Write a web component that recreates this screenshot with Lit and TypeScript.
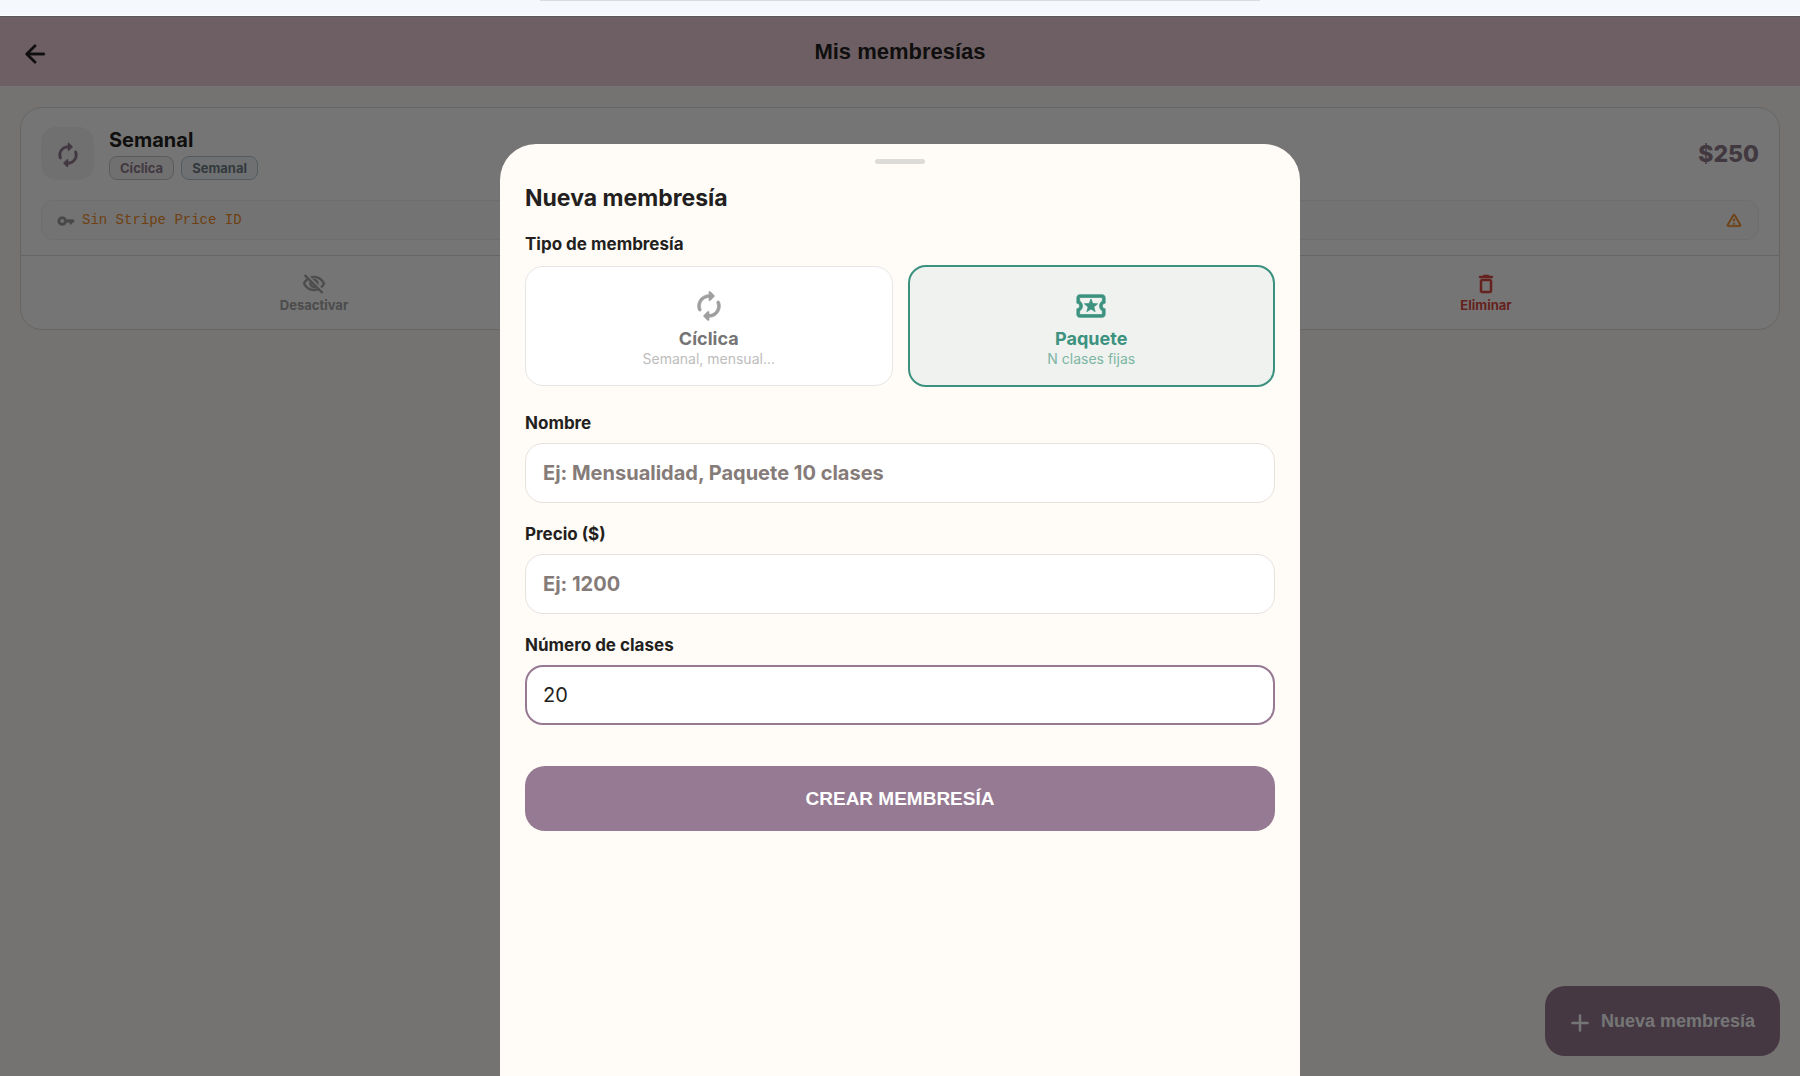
import { LitElement, html, css, svg } from "lit";
import { customElement, state } from "lit/decorators.js";

const icons = {
  back: svg`<path d="M19 11H7.83l4.88-4.88c.39-.39.39-1.03 0-1.42a.996.996 0 0 0-1.41 0l-6.59 6.59a.996.996 0 0 0 0 1.41l6.59 6.59a.996.996 0 1 0 1.41-1.41L7.83 13H19c.55 0 1-.45 1-1s-.45-1-1-1z"/>`,
  renew: svg`<path d="M12 6v1.79c0 .45.54.67.85.35l2.79-2.79c.2-.2.2-.51 0-.71l-2.79-2.79c-.31-.31-.85-.09-.85.36V4c-4.42 0-8 3.58-8 8 0 1.04.2 2.04.57 2.95.27.67 1.13.85 1.64.34.27-.27.38-.68.23-1.04C6.15 13.56 6 12.79 6 12c0-3.31 2.69-6 6-6zm5.79 2.71c-.27.27-.38.69-.23 1.04.28.7.44 1.46.44 2.25 0 3.31-2.69 6-6 6v-1.79c0-.45-.54-.67-.85-.35l-2.79 2.79c-.2.2-.2.51 0 .71l2.79 2.79c.31.31.85.09.85-.35V20c4.42 0 8-3.58 8-8 0-1.04-.2-2.04-.57-2.95-.27-.67-1.13-.85-1.64-.34z"/>`,
  key: svg`<path fill-rule="evenodd" d="M7 6a6 6 0 1 0 5.66 8H17v1a1.5 1.5 0 0 0 3 0v-1h1a2 2 0 0 0 0-4h-8.34A6 6 0 0 0 7 6zm0 3.2a2.8 2.8 0 1 1 0 5.6 2.8 2.8 0 0 1 0-5.6z"/>`,
  warn: svg`<path d="M12 5.99 19.53 19H4.47L12 5.99M2.74 18c-.77 1.33.19 3 1.73 3h15.06c1.54 0 2.5-1.67 1.73-3L13.73 4.99c-.77-1.33-2.69-1.33-3.46 0L2.74 18zM11 11v2c0 .55.45 1 1 1s1-.45 1-1v-2c0-.55-.45-1-1-1s-1 .45-1 1zm0 5h2v2h-2z"/>`,
  hide: svg`<path d="M12 6a9.77 9.77 0 0 1 8.82 5.5 9.647 9.647 0 0 1-2.41 3.12l1.41 1.41c1.39-1.23 2.49-2.77 3.18-4.53C21.27 7.11 17 4 12 4c-1.27 0-2.49.2-3.64.57l1.65 1.65C10.66 6.09 11.32 6 12 6zm-1.07 1.14L13 9.21c.57.25 1.03.71 1.28 1.28l2.07 2.07c.08-.34.14-.7.14-1.07C16.5 9.01 14.48 7 12 7c-.37 0-.72.05-1.07.14zM2.01 3.87l2.68 2.68A11.738 11.738 0 0 0 1 11.5C2.73 15.89 7 19 12 19c1.52 0 2.98-.29 4.32-.82l3.42 3.42 1.41-1.41L3.42 2.45 2.01 3.87zm7.5 7.5 2.61 2.61c-.04.01-.08.02-.12.02a2.5 2.5 0 0 1-2.5-2.5c0-.05.01-.08.01-.13zm-3.4-3.4 1.75 1.75a4.6 4.6 0 0 0-.36 1.78 4.507 4.507 0 0 0 6.27 4.14l.98.98c-.88.24-1.8.38-2.75.38a9.77 9.77 0 0 1-8.82-5.5c.7-1.43 1.72-2.61 2.93-3.53z"/>`,
  trash: svg`<path d="M6 19c0 1.1.9 2 2 2h8c1.1 0 2-.9 2-2V9c0-1.1-.9-2-2-2H8c-1.1 0-2 .9-2 2v10zM8 9h8v10H8V9zm7.5-5-.71-.71c-.18-.18-.44-.29-.7-.29H9.91c-.26 0-.52.11-.7.29L8.5 4H6c-.55 0-1 .45-1 1s.45 1 1 1h12c.55 0 1-.45 1-1s-.45-1-1-1h-2.5z"/>`,
  ticket: svg`<path d="M20 12c0-1.1.9-2 2-2V6c0-1.1-.9-2-2-2H4c-1.1 0-1.99.9-1.99 2v4c1.1 0 1.99.9 1.99 2s-.89 2-2 2v4c0 1.1.9 2 2 2h16c1.1 0 2-.9 2-2v-4c-1.1 0-2-.9-2-2zm0-3.46c-1.19.69-2 1.99-2 3.46s.81 2.77 2 3.46V18H4v-2.54c1.19-.69 2-1.99 2-3.46 0-1.48-.8-2.77-1.99-3.46L4 6h16v2.54zM9.07 16 12 14.12 14.93 16l-.89-3.36 2.69-2.2-3.47-.21L12 7l-1.27 3.22-3.47.21 2.69 2.2z"/>`,
  add: svg`<path d="M18 13h-5v5c0 .55-.45 1-1 1s-1-.45-1-1v-5H6c-.55 0-1-.45-1-1s.45-1 1-1h5V6c0-.55.45-1 1-1s1 .45 1 1v5h5c.55 0 1 .45 1 1s-.45 1-1 1z"/>`,
};

const icon = (name: keyof typeof icons, size: string) =>
  html`<svg class="icon ${size}" viewBox="0 0 24 24" aria-hidden="true">${icons[name]}</svg>`;

@customElement("app-root")
export class AppRoot extends LitElement {
  static styles = css`
    :host {
      display: flex;
      flex-direction: column;
      height: 100vh;
      overflow: hidden;
      font-family: Inter, "Liberation Sans", sans-serif;
      color: #231f20;
    }
    * { box-sizing: border-box; }
    button, input { font: inherit; color: inherit; margin: 0; }
    button { border: 0; background: none; padding: 0; cursor: pointer; }
    h1, h2, p { margin: 0; }
    .icon { display: block; flex: none; fill: currentColor; stroke: currentColor; stroke-width: 0.5; }
    .s18 { width: 18px; height: 18px; }
    .s24 { width: 24px; height: 24px; }
    .s28 { width: 28px; height: 28px; }
    .s30 { width: 30px; height: 30px; }
    .s34 { width: 34px; height: 34px; }

    .chrome {
      flex: none;
      height: 16px;
      background: #f5f9fd;
      border-bottom: 1px solid #ffffff;
      display: flex;
      justify-content: center;
    }
    .address { width: 40%; height: 1px; background: #d9dcdf; }
    .screen { flex: 1; position: relative; background: #fffbf7; overflow: hidden; }

    .bar {
      display: grid;
      grid-template-columns: 1fr auto 1fr;
      align-items: center;
      height: 70px;
      padding: 0 20px;
      background: #efd0d9;
      border-top: 1px solid #c9bcc6;
    }
    .bar h1 {
      font-family: "Liberation Sans", sans-serif;
      font-size: 22px; line-height: 28px; font-weight: 700;
    }
    .back { justify-self: start; padding-top: 4px; }
    .back .icon { stroke-width: 0.3; }

    .list { padding: 21px 20px; }
    .card { border: 1px solid #dcdcdc; border-radius: 22px; background: #ffffff; overflow: hidden; }
    .body { padding: 19px 20px 15px; display: flex; flex-direction: column; gap: 20px; }
    .top { display: flex; align-items: center; gap: 15px; }
    .badge {
      width: 53px; height: 53px; border-radius: 15px; background: #f5f4f5;
      display: grid; place-items: center; padding-top: 3px; color: #8f7a8d;
    }
    .info { flex: 1; }
    .info h2 { font-size: 20px; line-height: 26px; font-weight: 700; }
    .tags { display: flex; gap: 7px; padding-top: 3px; }
    .tag {
      height: 24px; padding: 0 10px; border: 1px solid; border-radius: 8px;
      font-size: 13px; line-height: 22px; font-weight: 700;
    }
    .tag.rose { color: #8f7a8d; border-color: #cbc4ca; background: #f7f4f6; }
    .tag.blue { color: #6f7d86; border-color: #b8c2c8; background: #f1f5f6; }
    .price { font-size: 23px; line-height: 30px; font-weight: 800; color: #8f7a8d; }
    .stripe {
      display: flex; align-items: center; gap: 7px; height: 40px; padding: 0 15px;
      border: 1px solid #eeeeee; border-radius: 12px; background: #fafafa;
      color: #f28c28; font-family: "Liberation Mono", monospace; font-size: 14px;
    }
    .stripe p { flex: 1; padding-bottom: 1px; }
    .grey { color: #9e9e9e; padding-top: 2px; }
    .actions { display: grid; grid-template-columns: repeat(3, 1fr); border-top: 1px solid #dcdcdc; }
    .action {
      display: flex; flex-direction: column; align-items: center;
      padding: 16px 0 15px; font-size: 13px; line-height: 18px; font-weight: 700; color: #a6a6a6;
    }
    .action.danger { grid-column: 3; color: #dd4a42; }

    .fab {
      position: absolute; right: 20px; bottom: 20px; height: 70px; padding: 0 25px 0 20px;
      display: flex; align-items: center; gap: 6px; border-radius: 20px;
      background: #967a93; color: #ffffff;
      font-family: "Liberation Sans", sans-serif; font-size: 18px; font-weight: 700;
    }
    .fab .icon { stroke: none; margin-top: 4px; }

    .scrim {
      position: absolute; inset: 0; padding-top: 128px;
      background: rgba(0, 0, 0, 0.54);
      display: flex; justify-content: center;
    }
    .sheet {
      width: 100%; max-width: 800px; padding: 15px 25px;
      display: flex; flex-direction: column;
      background: #fffbf7; border-radius: 36px 36px 0 0;
    }
    .handle { align-self: center; width: 50px; height: 5px; border-radius: 3px; background: #dddbd7; }
    .sheet h2 { font-size: 23px; line-height: 30px; font-weight: 700; padding-top: 19px; }
    .label { font-size: 17px; line-height: 20px; font-weight: 700; }
    .kinds { border: 0; margin: 0; padding: 21px 0 0; min-width: 0; }
    .kinds legend { padding: 0; float: left; width: 100%; margin-bottom: 11px; }
    .options { clear: both; display: grid; grid-template-columns: 1fr 1fr; gap: 15px; align-items: center; }
    .kind {
      display: flex; flex-direction: column; align-items: center;
      height: 120px; padding-top: 22px; border: 1px solid #e6e6e6; border-radius: 18px;
      background: #ffffff; color: #757575;
    }
    .kind .icon { color: #9e9e9e; }
    .kind strong { font-size: 18px; line-height: 22px; font-weight: 700; padding-top: 5px; }
    .kind small { font-size: 14px; line-height: 18px; color: #bdbdbd; }
    .kind.on { height: 122px; border: 2px solid #3c927f; background: #eff2ef; color: #3c927f; }
    .kind.on .icon { color: #3c927f; }
    .kind.on small { color: #7db5a5; }
    .fields { display: flex; flex-direction: column; gap: 21px; padding-top: 26px; }
    .field { display: flex; flex-direction: column; gap: 10px; }
    .field input {
      width: 100%; height: 60px; padding: 0 17px; border: 1px solid #e8e1de; border-radius: 18px;
      background: #ffffff; font-size: 20px; outline: none;
    }
    .field input::placeholder { color: #857b79; font-weight: 700; opacity: 1; }
    .field input.active { border: 2px solid #967a93; padding: 0 16px; }
    .submit {
      margin-top: 41px; height: 65px; border-radius: 20px; background: #967a93; color: #ffffff;
      font-family: "Liberation Sans", sans-serif; font-size: 19px; font-weight: 700;
    }
  `;

  @state() private kind = "paquete";

  private option(id: string, name: string, note: string, glyph: keyof typeof icons) {
    const on = this.kind === id;
    return html`<button type="button" class="kind ${on ? "on" : ""}" aria-pressed=${on}
      @click=${() => (this.kind = id)}>
      ${icon(glyph, "s34")}<strong>${name}</strong><small>${note}</small>
    </button>`;
  }

  render() {
    return html`
      <div class="chrome"><div class="address"></div></div>
      <div class="screen">
        <header class="bar">
          <button class="back" aria-label="Volver">${icon("back", "s30")}</button>
          <h1>Mis membresías</h1>
        </header>
        <main class="list">
          <article class="card">
            <div class="body">
              <div class="top">
                <div class="badge">${icon("renew", "s28")}</div>
                <div class="info">
                  <h2>Semanal</h2>
                  <div class="tags"><span class="tag rose">Cíclica</span><span class="tag blue">Semanal</span></div>
                </div>
                <p class="price">$250</p>
              </div>
              <div class="stripe">
                <span class="grey">${icon("key", "s18")}</span>
                <p>Sin Stripe Price ID</p>
                ${icon("warn", "s18")}
              </div>
            </div>
            <div class="actions">
              <button class="action">${icon("hide", "s24")}Desactivar</button>
              <button class="action danger">${icon("trash", "s24")}Eliminar</button>
            </div>
          </article>
        </main>
        <button class="fab">${icon("add", "s30")}Nueva membresía</button>
        <div class="scrim">
          <form class="sheet" role="dialog" aria-labelledby="title" @submit=${(e: Event) => e.preventDefault()}>
            <div class="handle"></div>
            <h2 id="title">Nueva membresía</h2>
            <fieldset class="kinds">
              <legend class="label">Tipo de membresía</legend>
              <div class="options">
                ${this.option("ciclica", "Cíclica", "Semanal, mensual...", "renew")}
                ${this.option("paquete", "Paquete", "N clases fijas", "ticket")}
              </div>
            </fieldset>
            <div class="fields">
              <div class="field">
                <label class="label" for="name">Nombre</label>
                <input id="name" type="text" placeholder="Ej: Mensualidad, Paquete 10 clases" />
              </div>
              <div class="field">
                <label class="label" for="price">Precio ($)</label>
                <input id="price" type="text" inputmode="decimal" placeholder="Ej: 1200" />
              </div>
              <div class="field">
                <label class="label" for="count">Número de clases</label>
                <input id="count" class="active" type="text" inputmode="numeric" value="20" />
              </div>
            </div>
            <button class="submit" type="submit">CREAR MEMBRESÍA</button>
          </form>
        </div>
      </div>
    `;
  }
}
